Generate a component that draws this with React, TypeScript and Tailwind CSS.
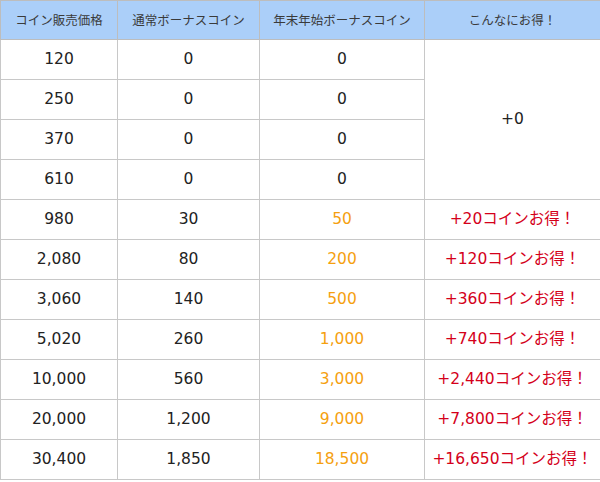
const rows = [
  { price: "120", normal: "0", bonus: "0", diff: null },
  { price: "250", normal: "0", bonus: "0", diff: null },
  { price: "370", normal: "0", bonus: "0", diff: null },
  { price: "610", normal: "0", bonus: "0", diff: null },
  { price: "980", normal: "30", bonus: "50", diff: "+20" },
  { price: "2,080", normal: "80", bonus: "200", diff: "+120" },
  { price: "3,060", normal: "140", bonus: "500", diff: "+360" },
  { price: "5,020", normal: "260", bonus: "1,000", diff: "+740" },
  { price: "10,000", normal: "560", bonus: "3,000", diff: "+2,440" },
  { price: "20,000", normal: "1,200", bonus: "9,000", diff: "+7,800" },
  { price: "30,400", normal: "1,850", bonus: "18,500", diff: "+16,650" },
];

const font = { fontFamily: '"DejaVu Sans", "Noto Sans CJK JP", sans-serif' };

export default function App() {
  return (
    <div className="w-[600px] bg-white" style={font}>
      <table className="w-[600px] table-fixed border-collapse text-center">
        <colgroup>
          <col className="w-[117px]" />
          <col className="w-[142px]" />
          <col className="w-[165px]" />
          <col className="w-[176px]" />
        </colgroup>
        <thead>
          <tr className="h-[39px] bg-[#abcff9] text-[12.5px] text-[#3a3a3a]">
            <th className="border border-[#bdbdbd] pt-[2px] font-normal">コイン販売価格</th>
            <th className="border border-[#bdbdbd] pt-[2px] font-normal">通常ボーナスコイン</th>
            <th className="border border-[#bdbdbd] pt-[2px] font-normal">年末年始ボーナスコイン</th>
            <th className="border border-[#bdbdbd] pt-[2px] font-normal">こんなにお得！</th>
          </tr>
        </thead>
        <tbody className="text-[15.5px] leading-none text-[#222]">
          {rows.map((r, i) => (
            <tr key={r.price} className="h-[40px]">
              <td className="border border-[#c8c8c8]">{r.price}</td>
              <td className="border border-[#c8c8c8]">{r.normal}</td>
              <td className={"border border-[#c8c8c8] " + (r.diff ? "text-[#f5a00f]" : "")}>{r.bonus}</td>
              {i === 0 && (
                <td rowSpan={4} className="border border-[#c8c8c8]">+0</td>
              )}
              {r.diff && (
                <td className="border border-[#c8c8c8] text-[#d4001a]">{r.diff}コインお得！</td>
              )}
            </tr>
          ))}
        </tbody>
      </table>
    </div>
  );
}
